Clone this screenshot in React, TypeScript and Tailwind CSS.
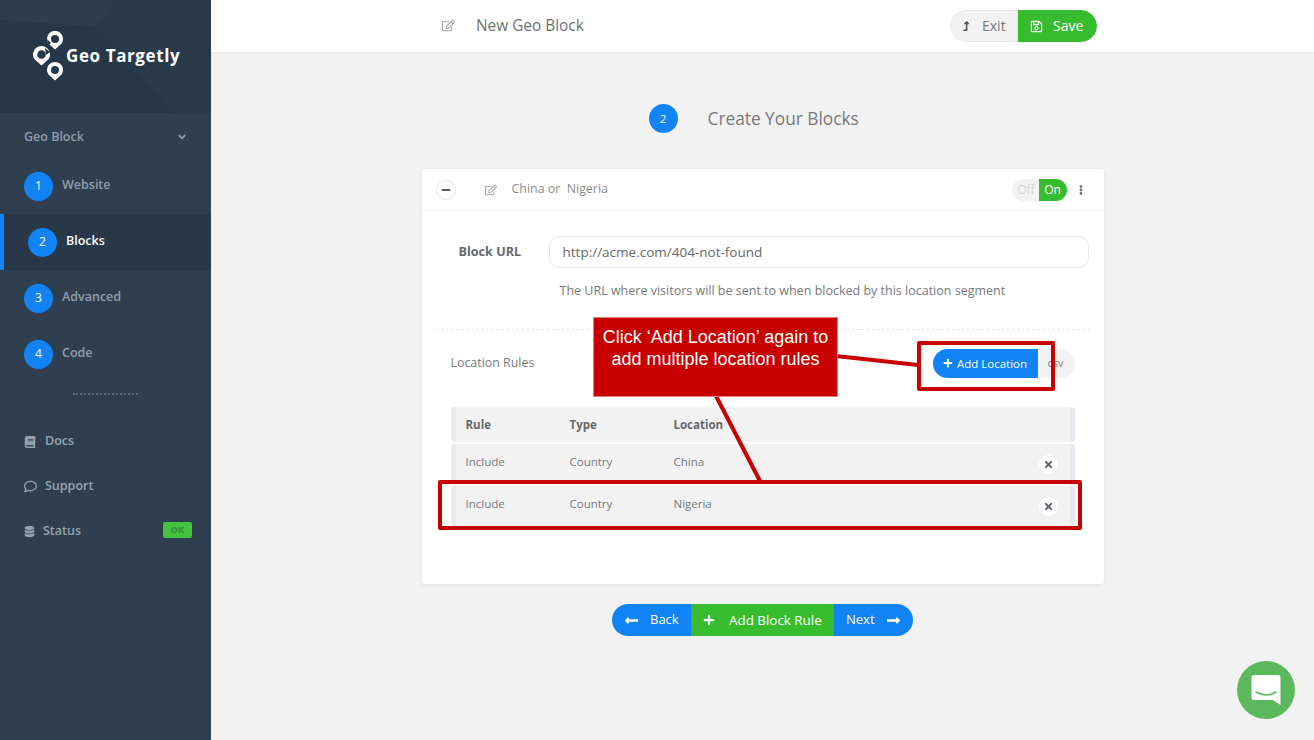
import React from "react";
import {
  FaRegEdit,
  FaLevelUpAlt,
  FaRegSave,
  FaBook,
  FaRegComment,
  FaDatabase,
  FaEllipsisV,
  FaPlus,
  FaTimes,
  FaMinus,
  FaAngleDown,
  FaLongArrowAltLeft,
  FaLongArrowAltRight,
} from "react-icons/fa";

function Pin({ cx, cy, r }: { cx: number; cy: number; r: number }) {
  const tip = cy + r * 1.3;
  return (
    <g>
      <path
        d={`M${cx} ${tip} L${cx - r * 0.85} ${cy + r * 0.52} A${r} ${r} 0 1 1 ${cx + r * 0.85} ${cy + r * 0.52} Z`}
        fill="#fff"
      />
      <circle cx={cx} cy={cy} r={r * 0.5} fill="#263747" />
    </g>
  );
}

function Logo() {
  return (
    <svg width="32" height="50" viewBox="0 0 32 50" className="shrink-0">
      <Pin cx={23} cy={8} r={8} />
      <Pin cx={9.5} cy={23.5} r={8.5} />
      <Pin cx={23} cy={39} r={8} />
      <path d="M13 17 L18 21 L14 24 Z" fill="#263747" />
      <path d="M15 8 L19 12 L16 14 Z" fill="#263747" />
    </svg>
  );
}

function Step({ n, label, active }: { n: number; label: string; active?: boolean }) {
  return (
    <div
      className={
        active
          ? "h-14 flex items-center gap-[9px] pl-6 border-l-4 border-[#1183f4] bg-[#283848]"
          : "h-14 flex items-center gap-[9px] pl-6"
      }
    >
      <div className="w-[29px] h-[29px] rounded-full bg-[#1183f4] text-white text-[12px] flex items-center justify-center">
        {n}
      </div>
      <span
        className={
          active
            ? "text-white text-[12.5px] font-semibold -mt-[1px]"
            : "text-[#8f9dad] text-[12.5px] font-semibold -mt-[1px]"
        }
      >
        {label}
      </span>
    </div>
  );
}

function SideLink({ icon, label, gap }: { icon: React.ReactNode; label: string; gap: string }) {
  return (
    <div className={`h-[45px] flex items-center pl-6 text-[#94a3b4] ${gap}`}>
      {icon}
      <span className="text-[12.5px] font-semibold">{label}</span>
    </div>
  );
}

function Row({ rule, type, location, className }: { rule: string; type: string; location: string; className: string }) {
  return (
    <div
      className={`flex items-center bg-[#f2f2f2] border-x-[5px] border-[#e6e9ed] rounded-[4px] pl-[10px] pr-[12px] text-[11.5px] text-[#77797c] ${className}`}
    >
      <span className="w-[104px] pb-[5px]">{rule}</span>
      <span className="w-[104px] pb-[5px]">{type}</span>
      <span className="flex-1 pb-[5px]">{location}</span>
      <span className="w-[19px] h-[19px] mt-[1px] rounded-full bg-white flex items-center justify-center text-[#5f6670]">
        <FaTimes size={11} />
      </span>
    </div>
  );
}

export default function App() {
  return (
    <div className="relative w-[1314px] h-[740px] overflow-hidden flex bg-[#f2f2f2] font-['Open_Sans',sans-serif]">
      <aside className="w-[211px] shrink-0 bg-[#303f50] flex flex-col">
        <div className="relative h-[113px] bg-[#263747] overflow-hidden flex items-center pl-[32px] pb-[1px]">
          <svg className="absolute inset-0" width="211" height="113" viewBox="0 0 211 113">
            <path d="M0 0 H115 L96 27 L0 20 Z" fill="#2b3d4e" />
            <path d="M96 27 L115 0 H211 V113 H172 Z" fill="#293a4b" />
          </svg>
          <div className="relative flex items-center gap-[2px]">
            <Logo />
            <span className="text-white text-[17px] font-bold tracking-[0.6px] whitespace-nowrap">
              Geo Targetly
            </span>
          </div>
        </div>
        <div className="h-[45px] pt-[3px] flex items-center justify-between pl-6 pr-[23px] text-[#8f9dad]">
          <span className="text-[12.5px] font-semibold">Geo Block</span>
          <FaAngleDown size={12} />
        </div>
        <Step n={1} label="Website" />
        <Step n={2} label="Blocks" active />
        <Step n={3} label="Advanced" />
        <Step n={4} label="Code" />
        <div className="ml-[73px] mt-[11px] w-[65px] border-t-2 border-dotted border-[#5d6a79]" />
        <div className="mt-[24px] flex flex-col">
          <SideLink icon={<FaBook size={12} />} label="Docs" gap="gap-[9px]" />
          <SideLink icon={<FaRegComment size={13} />} label="Support" gap="gap-2" />
          <div className="h-[45px] flex items-center pl-6 pr-[19px] gap-2 text-[#94a3b4]">
            <FaDatabase size={11} />
            <span className="text-[12.5px] font-semibold flex-1">Status</span>
            <span className="w-[29px] h-[16px] -mt-[3px] rounded-[2px] bg-[#44c43e] text-[#2c8a3a] text-[9.5px] font-bold flex items-center justify-center">
              OK
            </span>
          </div>
        </div>
      </aside>

      <main className="flex-1 flex flex-col min-w-0">
        <header className="h-[53px] shrink-0 bg-white border-b border-[#ebebeb] flex items-center justify-between pl-[231px] pr-[217px]">
          <div className="flex items-center gap-[21px] text-[#77797c] -mt-[1px]">
            <FaRegEdit size={13} className="text-[#a5a7a9]" />
            <span className="text-[15.4px] text-[#6e7072]">New Geo Block</span>
          </div>
          <div className="flex h-8 text-[14px] rounded-full overflow-hidden">
            <div className="w-[68px] bg-[#f2f2f2] border border-[#e8e8e8] rounded-l-full flex items-center pl-[10px] gap-[11px] text-[#77797c]">
              <FaLevelUpAlt size={10} className="text-[#555]" />
              <span className="-mt-[2px]">Exit</span>
            </div>
            <div className="w-[79px] bg-[#37bb2f] text-white rounded-r-full flex items-center pl-3 gap-[10px]">
              <FaRegSave size={13} />
              <span className="-mt-[2px]">Save</span>
            </div>
          </div>
        </header>

        <div className="w-[682px] mx-auto flex flex-col">
          <div className="mt-[51px] pl-[227px] flex items-center gap-[30px]">
            <div className="w-[29px] h-[29px] rounded-full bg-[#1183f4] text-white text-[11.5px] flex items-center justify-center">
              2
            </div>
            <span className="text-[17.3px] text-[#77797c]">Create Your Blocks</span>
          </div>

          <section className="mt-[36px] h-[415px] bg-white rounded-[3px] shadow-[0_1px_4px_rgba(0,0,0,0.08)] flex flex-col">
            <div className="h-[42px] shrink-0 border-b border-[#f0f0f0] flex items-center pl-[14px] pr-[18px]">
              <span className="w-5 h-5 rounded-full border border-[#e3e3e3] flex items-center justify-center text-[#555c66]">
                <FaMinus size={10} />
              </span>
              <FaRegEdit size={12} className="ml-[29px] text-[#a5a7a9]" />
              <span className="ml-[15px] flex-1 text-[12.4px] text-[#8a8c8f] whitespace-pre -mt-[1px]">China or  Nigeria</span>
              <div className="flex h-[22px] text-[12px] w-[55px]">
                <span className="w-[27px] bg-[#f2f2f2] rounded-l-full text-[#d4d4d4] flex items-center justify-center pl-[2px]">
                  Off
                </span>
                <span className="w-[28px] bg-[#37bb2f] text-white rounded-r-full flex items-center justify-center font-medium">
                  On
                </span>
              </div>
              <FaEllipsisV size={10} className="ml-[9px] text-[#666e78]" />
            </div>

            <div className="mt-[25px] flex items-center pl-[37px] pr-[15px]">
              <span className="w-[90px] text-[12.6px] font-bold text-[#66686b]">Block URL</span>
              <div className="flex-1 h-8 rounded-[10px] border border-[#e6e6e6] pl-[13px] flex items-center text-[13.5px] text-[#66686b]">
                http://acme.com/404-not-found
              </div>
            </div>
            <p className="mt-[14px] pl-[138px] text-[12.5px] text-[#77797c]">
              The URL where visitors will be sent to when blocked by this location segment
            </p>
            <div className="mt-[28px] mx-[14px] border-t border-dashed border-[#e6e6e6]" />

            <div className="mt-[19px] flex items-center pl-[29px] pr-[29px]">
              <span className="flex-1 text-[12.4px] text-[#77797c] mt-[1px]">Location Rules</span>
              <div className="flex h-[29px] w-[142px]">
                <span className="w-[105px] bg-[#1183f4] rounded-l-full text-white text-[11.5px] flex items-center justify-center gap-[4px]">
                  <FaPlus size={10} />
                  Add Location
                </span>
                <span className="flex-1 bg-[#f2f2f2] rounded-r-full text-[#77797c] text-[11px] flex items-center pl-[10px]">
                  csv
                </span>
              </div>
            </div>

            <div className="mt-[29px] mx-[29px] flex flex-col">
              <div className="h-[35px] flex items-center bg-[#f2f2f2] border-x-[5px] border-[#e6e9ed] rounded-[4px] pl-[10px] text-[11.5px] font-bold text-[#66686b]">
                <span className="w-[104px]">Rule</span>
                <span className="w-[104px]">Type</span>
                <span>Location</span>
              </div>
              <Row rule="Include" type="Country" location="China" className="h-[41px] mt-[2px]" />
              <Row rule="Include" type="Country" location="Nigeria" className="h-[40px] mt-[1px]" />
            </div>
          </section>

          <div className="mt-[20px] mx-auto flex h-[32px] text-[13px] text-white">
            <div className="w-[79px] bg-[#1183f4] rounded-l-full flex items-center pl-3 gap-[11px]">
              <FaLongArrowAltLeft size={15} />
              <span>Back</span>
            </div>
            <div className="w-[143px] bg-[#37bb2f] flex items-center pl-3 gap-[14px]">
              <FaPlus size={12} />
              <span className="text-[13.4px]">Add Block Rule</span>
            </div>
            <div className="w-[79px] bg-[#1183f4] rounded-r-full flex items-center pl-3 gap-[11px]">
              <span>Next</span>
              <FaLongArrowAltRight size={15} />
            </div>
          </div>
        </div>
      </main>

      {/* annotations laid over the page */}
      <svg className="absolute inset-0 pointer-events-none" width="1314" height="740" viewBox="0 0 1314 740">
        <path d="M836 356 L918 365" stroke="#c80000" strokeWidth="4" />
        <path d="M716 396 L760 481" stroke="#c80000" strokeWidth="4" />
      </svg>
      <div className="absolute left-[593px] top-[317px] w-[245px] h-[80px] bg-[#c80000] border border-[#e08080] text-white text-[18px] leading-[22px] text-center pt-[8px] font-['Liberation_Sans',sans-serif]">
        Click ‘Add Location’ again to
        <br />
        add multiple location rules
      </div>
      <div className="absolute left-[917px] top-[341px] w-[138px] h-[50px] border-4 border-[#c80000] rounded-[2px]" />
      <div className="absolute left-[438px] top-[480px] w-[644px] h-[50px] border-4 border-[#c80000] rounded-[2px]" />

      <div className="absolute left-[1237px] top-[661px] w-[58px] h-[58px] rounded-full bg-[#5cb85c] flex items-center justify-center">
        <svg width="30" height="32" viewBox="0 0 30 32">
          <path
            d="M3 1 H27 a2.5 2.5 0 0 1 2.5 2.5 V31 L22 26 H3 a2.5 2.5 0 0 1 -2.5 -2.5 V3.5 A2.5 2.5 0 0 1 3 1 Z"
            fill="#fff"
          />
          <path d="M5 18 Q15 24 25 18" stroke="#5cb85c" strokeWidth="1.6" fill="none" strokeLinecap="round" />
        </svg>
      </div>
    </div>
  );
}
